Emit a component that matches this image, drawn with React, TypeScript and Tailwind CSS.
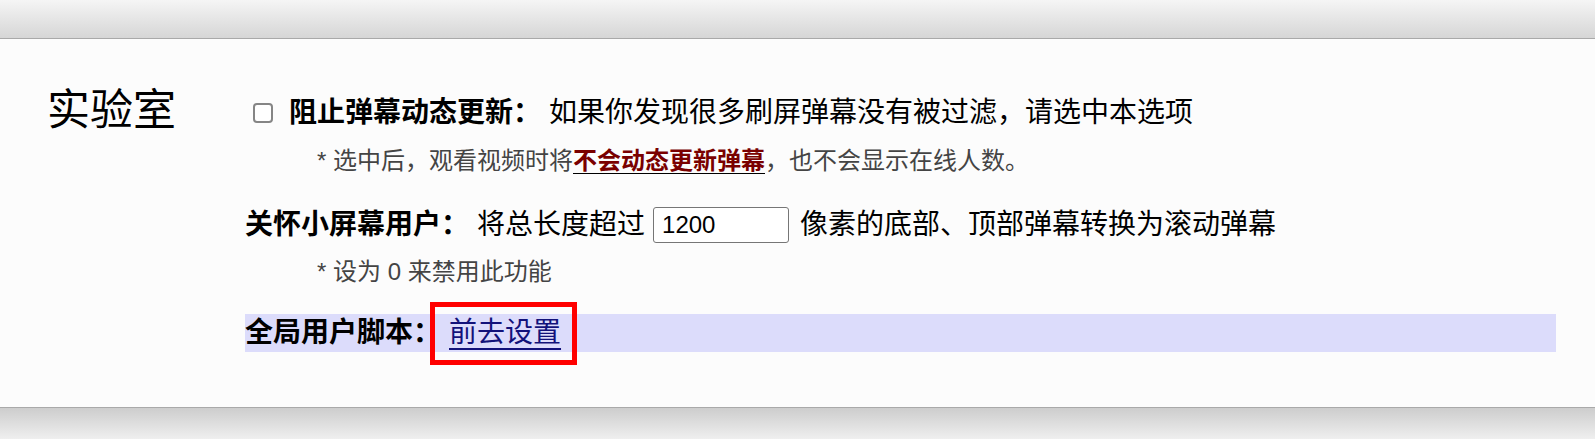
import React, { useState } from 'react';

// Options panel: "实验室" (lab) section
const FONT = '"Liberation Sans", "Noto Sans CJK SC", sans-serif';

const App: React.FC = () => {
  const [blockDynamic, setBlockDynamic] = useState(false);
  const [maxWidth, setMaxWidth] = useState('1200');

  return (
    <div className="w-[1595px] h-[439px] flex flex-col bg-[#eeeeee] text-black" style={{ fontFamily: FONT }}>
      {/* top shade */}
      <div className="h-[39px] shrink-0 bg-gradient-to-b from-[#f5f5f5] to-[#d6d6d6] border-b border-[#a9a9a9]" />

      <main className="h-[368px] shrink-0 bg-[#fcfcfc] flex">
        <div className="w-[245px] shrink-0 pl-[47px] pt-[51px]">
          <h2 className="text-[43px] leading-[40px] h-[40px] font-normal whitespace-nowrap">实验室</h2>
        </div>

        <div className="flex-1 pr-[39px] pt-[56px] text-[28px]">
          {/* block dynamic update */}
          <div className="h-[36px] flex items-center whitespace-nowrap">
            <input
              type="checkbox"
              checked={blockDynamic}
              onChange={e => setBlockDynamic(e.target.checked)}
              className="appearance-none ml-[8px] w-[20px] h-[20px] border-2 border-[#858585] rounded-[4px] bg-white"
            />
            <b className="ml-[16px] font-bold leading-[36px]">阻止弹幕动态更新：</b>
            <span className="ml-[8px] leading-[36px]">如果你发现很多刷屏弹幕没有被过滤，请选中本选项</span>
          </div>
          <div className="mt-[18px] h-[24px] pl-[72px] text-[24px] leading-[24px] text-[#444] whitespace-nowrap">
            * 选中后，观看视频时将
            <span className="inline-block leading-[24px] font-bold text-[#7a0000] border-b border-black">不会动态更新弹幕</span>
            ，也不会显示在线人数。
          </div>

          {/* small screen users */}
          <div className="mt-[34px] h-[36px] flex items-center whitespace-nowrap">
            <b className="font-bold leading-[36px]">关怀小屏幕用户：</b>
            <span className="ml-[8px] leading-[36px]">将总长度超过</span>
            <input
              type="text"
              value={maxWidth}
              onChange={e => setMaxWidth(e.target.value)}
              className="ml-[8px] w-[136px] h-[36px] border border-[#767676] rounded-[3px] bg-white pl-[8px] text-[24px] text-black outline-none"
              style={{ fontFamily: FONT }}
            />
            <span className="ml-[11px] leading-[36px]">像素的底部、顶部弹幕转换为滚动弹幕</span>
          </div>
          <div className="mt-[17px] h-[24px] pl-[72px] text-[24px] leading-[24px] text-[#444] whitespace-nowrap">
            * 设为 0 来禁用此功能
          </div>

          {/* global user script */}
          <div className="mt-[30px] h-[38px] flex items-center bg-[#dcdcfb] whitespace-nowrap">
            <b className="font-bold leading-[38px]">全局用户脚本：</b>
            <span className="relative ml-[8px] self-stretch flex items-center">
              <a href="#" className="text-[#12127a] underline underline-offset-[6px] decoration-[1.5px] leading-[38px]">前去设置</a>
              <span className="pointer-events-none absolute -left-[19px] -right-[16px] -top-[12px] -bottom-[13px] border-[5px] border-[#ff0000]" />
            </span>
          </div>
        </div>
      </main>

      {/* bottom shade */}
      <div className="flex-1 bg-gradient-to-b from-[#cdcdcd] to-[#efefef] border-t border-[#a9a9a9]" />
    </div>
  );
};

export default App;
